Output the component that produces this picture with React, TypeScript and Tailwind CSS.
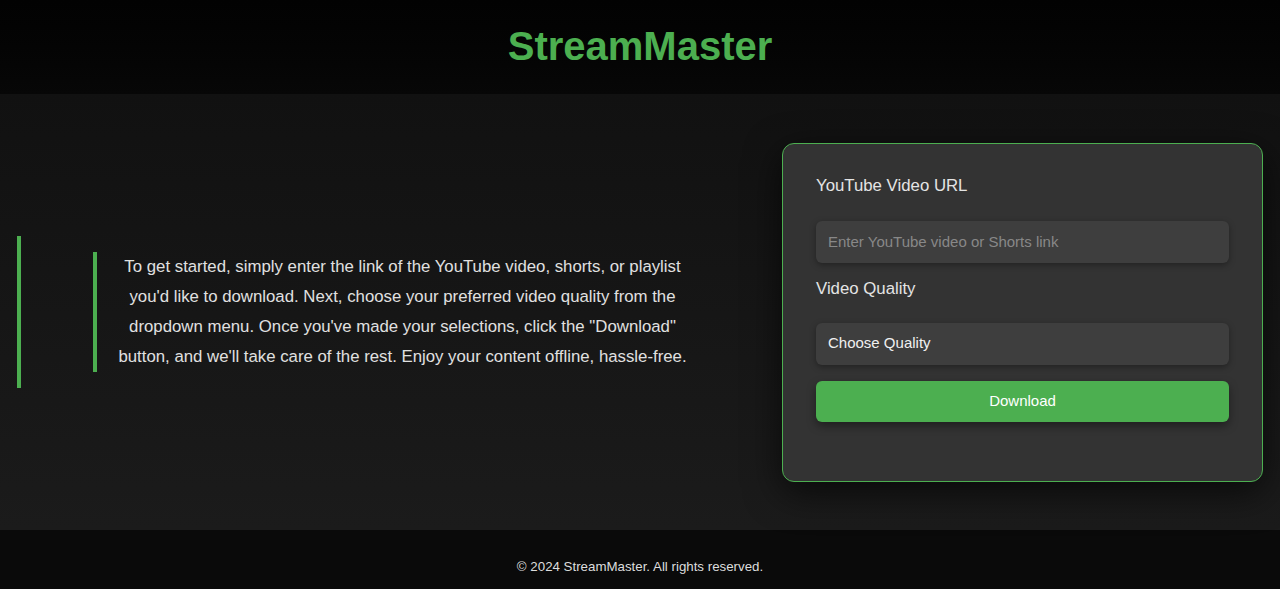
import { useState } from 'react'

const intro = [
  'To get started, simply enter the link of the YouTube video, shorts, or playlist',
  "you'd like to download. Next, choose your preferred video quality from the",
  'dropdown menu. Once you\'ve made your selections, click the "Download"',
  "button, and we'll take care of the rest. Enjoy your content offline, hassle-free.",
]

export default function App() {
  const [url, setUrl] = useState('')
  const [quality, setQuality] = useState('')

  return (
    <div className="min-h-[589px] bg-[#111] font-['Liberation_Sans',Arial,sans-serif] text-[#ddd]">
      <header className="flex h-[94px] items-center justify-center bg-gradient-to-b from-[#020202] to-[#070707] pb-[3px]">
        <h1 className="text-[40px] font-bold leading-[46px] text-[#4caf50]">StreamMaster</h1>
      </header>

      <main className="flex h-[436px] items-center bg-gradient-to-b from-[#111] to-[#1b1b1b] px-[17px]">
        <section className="flex-1 border-l-4 border-[#4caf50] py-[16px] pl-[72px]">
          <p className="w-[599px] border-l-4 border-[#4caf50] pl-[16px] text-center text-[16.8px] leading-[30px] text-[#e0e0e0]">
            {intro.map((line, i) => (
              <span key={i}>
                {line}
                {i < intro.length - 1 && <br />}
              </span>
            ))}
          </p>
        </section>

        <form
          onSubmit={e => e.preventDefault()}
          className="flex h-[339px] w-[481px] flex-col rounded-xl border border-[#4caf50] bg-[#333] px-[33px] pt-[30px] shadow-[0_10px_36px_rgba(0,0,0,0.65)]"
        >
          <label className="text-[16.8px] leading-6 text-[#e4e4e4]">YouTube Video URL</label>
          <input
            value={url}
            onChange={e => setUrl(e.target.value)}
            placeholder="Enter YouTube video or Shorts link"
            className="mt-[23px] h-[42px] rounded-md bg-[#3e3e3e] px-3 text-[15px] text-[#eee] shadow-[0_2px_6px_rgba(0,0,0,0.35)] outline-none placeholder:text-[#888]"
          />
          <label className="mt-[14px] text-[16.8px] leading-6 text-[#e4e4e4]">Video Quality</label>
          <select
            value={quality}
            onChange={e => setQuality(e.target.value)}
            className="mt-[22px] h-[42px] appearance-none rounded-md bg-[#3e3e3e] px-3 text-[15px] text-[#f0f0f0] shadow-[0_2px_6px_rgba(0,0,0,0.35)] outline-none"
          >
            <option value="">Choose Quality</option>
            <option value="1080">1080p</option>
            <option value="720">720p</option>
            <option value="480">480p</option>
          </select>
          <button
            type="submit"
            className="mt-[16px] h-[41px] rounded-md bg-[#4caf50] text-[15px] text-white shadow-[0_4px_10px_rgba(0,0,0,0.4)]"
          >
            Download
          </button>
        </form>
      </main>

      <footer className="h-[59px] bg-[#0a0a0a] pt-[27px] text-center text-[13.3px] leading-5 text-[#ddd]">
        © 2024 StreamMaster. All rights reserved.
      </footer>
    </div>
  )
}
